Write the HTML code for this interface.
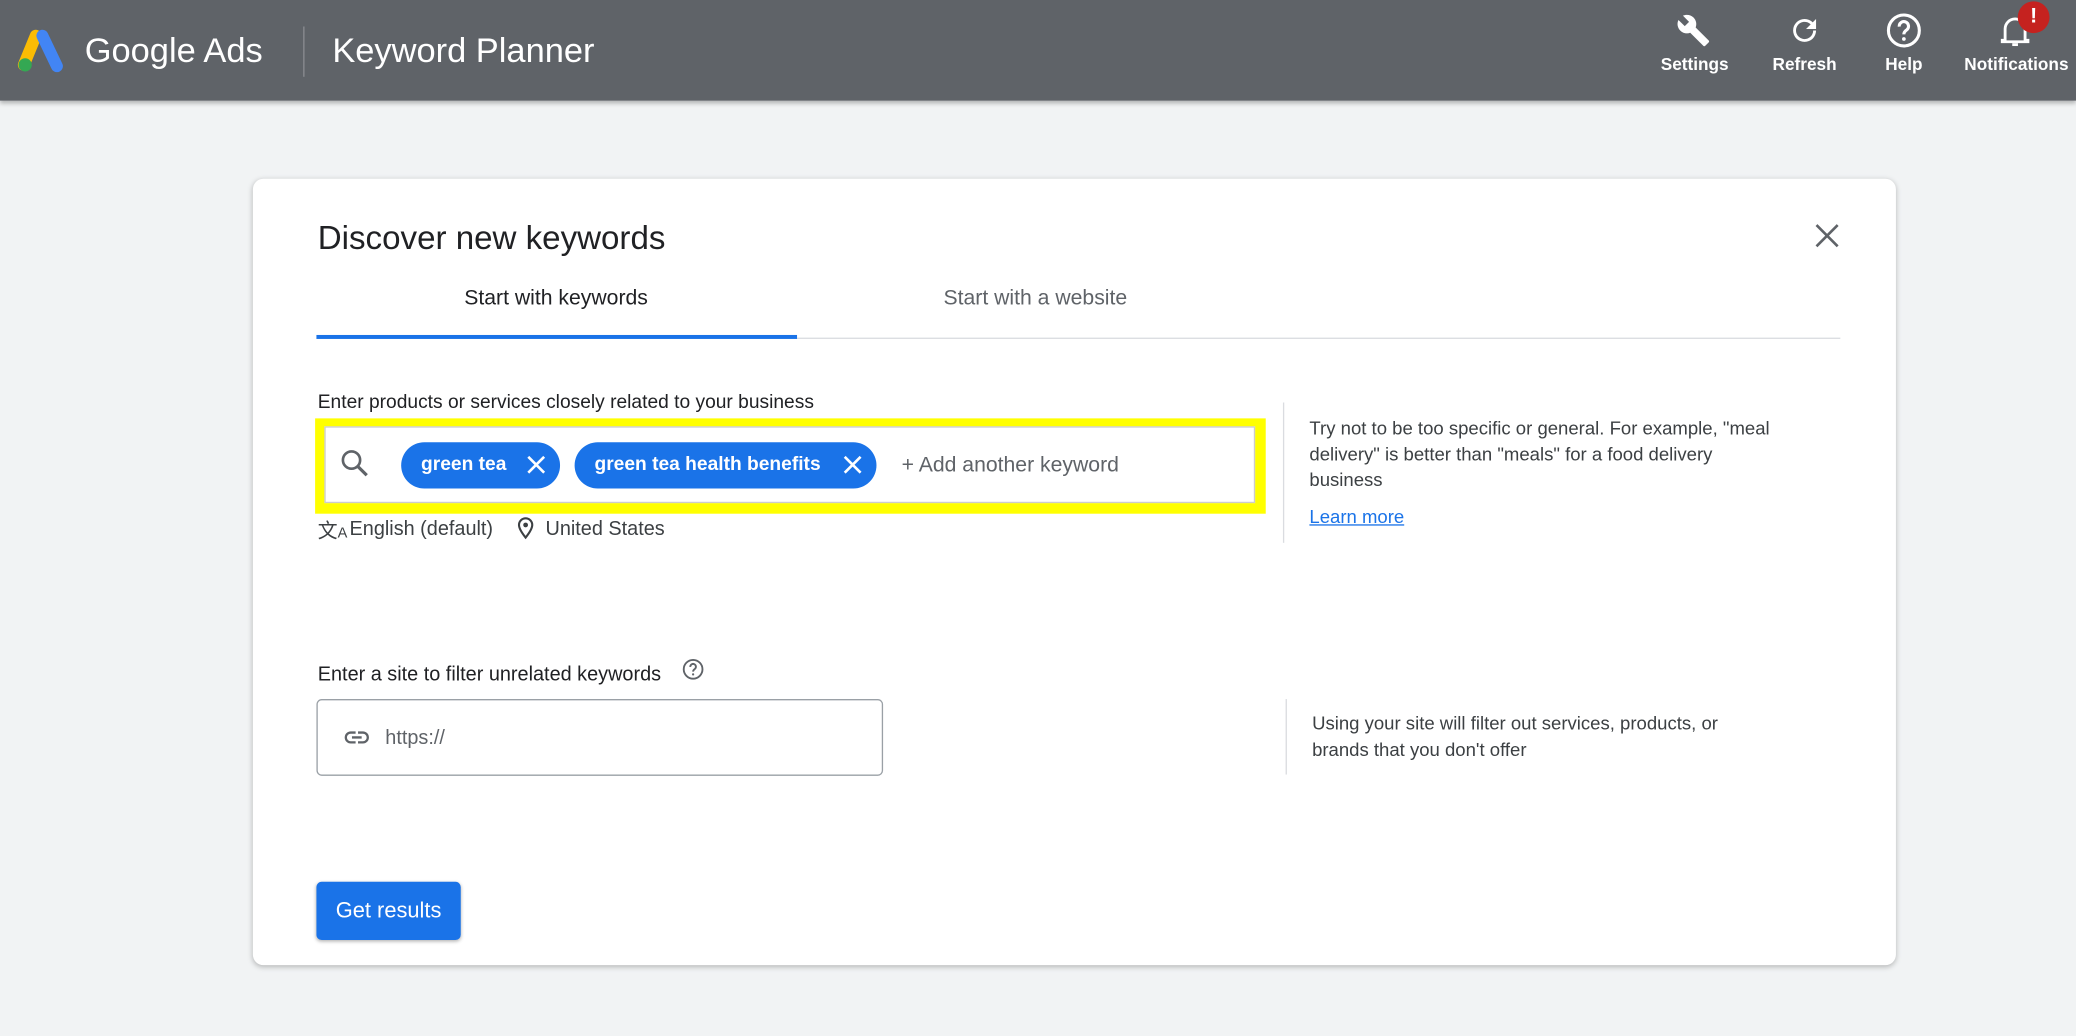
<!DOCTYPE html>
<html><head><meta charset="utf-8"><style>
html,body{margin:0;padding:0;width:2076px;height:1036px;overflow:hidden;background:#f1f3f4;font-family:"Liberation Sans",Arial,sans-serif}
#w{position:absolute;left:0;top:0;width:1568px;height:782px;transform:scale(1.32398);transform-origin:0 0;background:#f1f3f4}
.a{position:absolute}
.top{left:0;top:0;width:1568px;height:76px;background:#5f6368;box-shadow:0 2px 3px rgba(0,0,0,.25)}
.tl{color:#fff;font-size:13px;font-weight:bold;text-align:center;width:80px}
.card{left:191px;top:135px;width:1241px;height:594px;background:#fff;border-radius:8px;box-shadow:0 1px 4px rgba(0,0,0,.25)}
.chip{height:35px;border-radius:18px;background:#1a73e8;color:#fff;font-size:14.5px;font-weight:bold;line-height:35px;padding-left:15px;box-sizing:border-box}
</style></head><body><div id="w">
<div class="a top">
<svg class="a" style="left:13px;top:22px" width="37" height="33" viewBox="0 0 37 33"><path d="M14 5 L5 27" stroke="#fbbc04" stroke-width="9" stroke-linecap="round"/><path d="M19 5 L30 28" stroke="#4285f4" stroke-width="9" stroke-linecap="round"/><circle cx="6" cy="27" r="5" fill="#34a853"/></svg>
<div class="a" style="left:64px;top:23px;color:#fff;font-size:26px">Google Ads</div>
<div class="a" style="left:229px;top:20px;width:1px;height:38px;background:#8a8d91"></div>
<div class="a" style="left:251px;top:23px;color:#fff;font-size:26px">Keyword Planner</div>
<svg class="a" style="left:1266px;top:10px" width="26" height="26" viewBox="0 0 24 24"><path fill="#fff" d="M22.7 19l-9.1-9.1c.9-2.3.4-5-1.5-6.9-2-2-5-2.4-7.4-1.3L9 6 6 9 1.6 4.7C.4 7.1.9 10.1 2.9 12.1c1.9 1.9 4.6 2.4 6.9 1.5l9.1 9.1c.4.4 1 .4 1.4 0l2.3-2.3c.5-.4.5-1.1.1-1.4z"/></svg>
<div class="a tl" style="left:1240px;top:41px">Settings</div>
<svg class="a" style="left:1350px;top:10px" width="26" height="26" viewBox="0 0 24 24"><path fill="#fff" d="M17.65 6.35A7.96 7.96 0 0012 4a8 8 0 108 8h-2a6 6 0 11-1.76-4.24L13 11h7V4l-2.35 2.35z"/></svg>
<div class="a tl" style="left:1323px;top:41px">Refresh</div>
<svg class="a" style="left:1424px;top:9px" width="28" height="28" viewBox="0 0 24 24"><circle cx="12" cy="12" r="10" fill="none" stroke="#fff" stroke-width="2"/><path d="M9 9.5a3 3 0 115 2c-1 .8-2 1.3-2 3" fill="none" stroke="#fff" stroke-width="2"/><circle cx="12" cy="17.5" r="1.2" fill="#fff"/></svg>
<div class="a tl" style="left:1398px;top:41px">Help</div>
<svg class="a" style="left:1509px;top:10px" width="26" height="28" viewBox="0 0 24 26"><path d="M5 19V11a7 7 0 0114 0v8h2v1H3v-1z" fill="none" stroke="#fff" stroke-width="2"/><rect x="10" y="21" width="4" height="2" fill="#fff"/></svg>
<div class="a" style="left:1524px;top:1px;width:24px;height:24px;border-radius:12px;background:#c5221f;color:#fff;font-weight:bold;font-size:16px;text-align:center;line-height:24px">!</div>
<div class="a tl" style="left:1478px;top:41px;width:90px">Notifications</div>
</div>
<div class="a card">
<div class="a" style="left:49px;top:31px;font-size:25px;color:#202124">Discover new keywords</div>
<svg class="a" style="left:1180px;top:34px" width="18" height="18"><path d="M1 1L17 17M17 1L1 17" stroke="#5f6368" stroke-width="2"/></svg>
<div class="a" style="left:48px;top:82px;width:362px;text-align:center;font-size:16px;color:#202124">Start with keywords</div>
<div class="a" style="left:410px;top:82px;width:362px;text-align:center;font-size:16px;color:#5f6368">Start with a website</div>
<div class="a" style="left:48px;top:120px;width:1151px;height:1px;background:#dadce0"></div>
<div class="a" style="left:48px;top:118px;width:363px;height:3px;background:#1a73e8"></div>
<div class="a" style="left:49px;top:161px;font-size:14.5px;color:#202124">Enter products or services closely related to your business</div>
<div class="a" style="left:47px;top:181px;width:718px;height:72px;background:#ffff00"></div>
<div class="a" style="left:54px;top:187px;width:703px;height:58px;background:#fff;border:1px solid #ccc;box-sizing:border-box"></div>
<svg class="a" style="left:65px;top:203px" width="24" height="24" viewBox="0 0 24 24"><circle cx="9.5" cy="9.5" r="6.5" fill="none" stroke="#5f6368" stroke-width="2"/><path d="M14.5 14.5L21 21" stroke="#5f6368" stroke-width="2.4"/></svg>
<div class="a chip" style="left:112px;top:199px;width:120px">green tea</div>
<svg class="a" style="left:207px;top:209px" width="14" height="14"><path d="M1 1L13 13M13 1L1 13" stroke="#fff" stroke-width="2"/></svg>
<div class="a chip" style="left:243px;top:199px;width:228px">green tea health benefits</div>
<svg class="a" style="left:446px;top:209px" width="14" height="14"><path d="M1 1L13 13M13 1L1 13" stroke="#fff" stroke-width="2"/></svg>
<div class="a" style="left:490px;top:208px;font-size:16px;color:#5f6368">+ Add another keyword</div>
<div class="a" style="left:49px;top:255px;font-size:15px;color:#3c4043">文<span style="font-size:11px">A</span></div>
<div class="a" style="left:73px;top:256px;font-size:15px;color:#3c4043">English (default)</div>
<svg class="a" style="left:199px;top:255px" width="14" height="18" viewBox="0 0 14 18"><path d="M7 16C3 11 2 8.5 2 6.5a5 5 0 0110 0C12 8.5 11 11 7 16z" fill="none" stroke="#3c4043" stroke-width="1.6"/><circle cx="7" cy="6.5" r="1.8" fill="#3c4043"/></svg>
<div class="a" style="left:221px;top:256px;font-size:15px;color:#3c4043">United States</div>
<div class="a" style="left:778px;top:169px;width:1px;height:106px;background:#dadce0"></div>
<div class="a" style="left:798px;top:179px;width:355px;font-size:14px;line-height:19.5px;color:#3c4043">Try not to be too specific or general. For example, "meal delivery" is better than "meals" for a food delivery business</div>
<div class="a" style="left:798px;top:247px;font-size:14px;color:#1a73e8;text-decoration:underline">Learn more</div>
<div class="a" style="left:49px;top:366px;font-size:15px;color:#202124">Enter a site to filter unrelated keywords</div>
<svg class="a" style="left:324px;top:362px" width="17" height="17" viewBox="0 0 24 24"><circle cx="12" cy="12" r="10" fill="none" stroke="#5f6368" stroke-width="2"/><path d="M9 9.5a3 3 0 115 2c-1 .8-2 1.3-2 3" fill="none" stroke="#5f6368" stroke-width="2"/><circle cx="12" cy="17.5" r="1.2" fill="#5f6368"/></svg>
<div class="a" style="left:48px;top:393px;width:428px;height:58px;border:1px solid #9aa0a6;border-radius:4px;box-sizing:border-box"></div>
<svg class="a" style="left:66px;top:411px" width="25" height="22" viewBox="0 0 24 24"><path d="M3.9 12c0-1.7 1.4-3.1 3.1-3.1h4V7H7a5 5 0 000 10h4v-1.9H7c-1.7 0-3.1-1.4-3.1-3.1zM8 13h8v-2H8v2zm9-6h-4v1.9h4c1.7 0 3.1 1.4 3.1 3.1s-1.4 3.1-3.1 3.1h-4V17h4a5 5 0 000-10z" fill="#5f6368"/></svg>
<div class="a" style="left:100px;top:414px;font-size:15px;color:#5f6368">https://</div>
<div class="a" style="left:780px;top:393px;width:1px;height:57px;background:#dadce0"></div>
<div class="a" style="left:800px;top:402px;width:340px;font-size:14px;line-height:19.5px;color:#3c4043">Using your site will filter out services, products, or brands that you don't offer</div>
<div class="a" style="left:48px;top:531px;width:109px;height:44px;background:#1a73e8;border-radius:4px;box-shadow:0 1px 3px rgba(0,0,0,.3);color:#fff;font-size:16.5px;text-align:center;line-height:44px">Get results</div>
</div>
</div></body></html>
